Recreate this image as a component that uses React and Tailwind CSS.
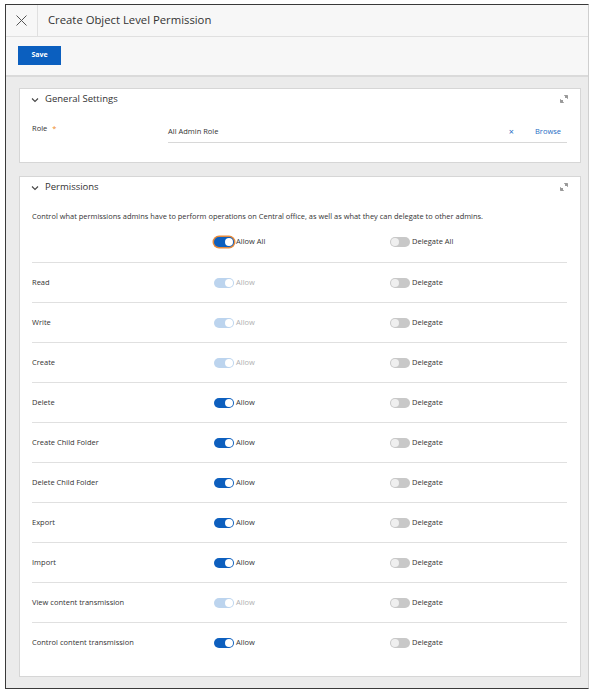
import React from "react";

const font = { fontFamily: '"Open Sans", "Noto Sans", Arial, sans-serif' };

function Toggle({ on, disabled, focus }) {
  let track = "bg-[#c8c8c8]";
  let knob = "bg-[#efefef] left-[1px]";
  if (on && !disabled) {
    track = "bg-[#0d5fbe]";
    knob = "bg-white right-[1px]";
  } else if (on && disabled) {
    track = "bg-[#bcd4ee]";
    knob = "bg-white right-[1px]";
  }
  return (
    <span
      className={
        "relative inline-block w-[20px] h-[10px] rounded-full shrink-0 " +
        track +
        (focus ? " ring-[1.5px] ring-[#e58a3c]" : "")
      }
    >
      <span className={"absolute top-[1px] w-[8px] h-[8px] rounded-full " + knob} />
    </span>
  );
}

function Expand() {
  return (
    <svg width="8" height="8" viewBox="0 0 8 8" className="text-[#9a9a9a]">
      <path d="M4.5 0.5H7.5V3.5Z M7.2 0.8L5 3" stroke="currentColor" strokeWidth="1" fill="currentColor" />
      <path d="M0.5 4.5V7.5H3.5Z M0.8 7.2L3 5" stroke="currentColor" strokeWidth="1" fill="currentColor" />
    </svg>
  );
}

function Chevron() {
  return (
    <svg width="8" height="6" viewBox="0 0 8 6" className="text-[#444]">
      <path d="M1 1.5L4 4.5L7 1.5" stroke="currentColor" strokeWidth="1.1" fill="none" />
    </svg>
  );
}

const rows = [
  ["Read", true, true],
  ["Write", true, true],
  ["Create", true, true],
  ["Delete", true, false],
  ["Create Child Folder", true, false],
  ["Delete Child Folder", true, false],
  ["Export", true, false],
  ["Import", true, false],
  ["View content transmission", true, true],
  ["Control content transmission", true, false],
];

export default function App() {
  return (
    <div className="w-[593px] h-[692px] bg-white pt-[4px] pl-[5px]" style={font}>
      <div className="w-[584px] h-[685px] border-l border-t border-b border-l-[#3a3a3a] border-t-[#3a3a3a] border-b-[#3a3a3a] border-r border-r-[#cfcfcf] flex flex-col">
        {/* header */}
        <div className="h-[32px] bg-[#f7f7f7] border-b border-[#e0e0e0] flex items-stretch shrink-0">
          <div className="w-[32px] border-r border-[#e0e0e0] flex items-center justify-center">
            <svg width="11" height="11" viewBox="0 0 11 11" className="text-[#555]">
              <path d="M0.5 0.5L10.5 10.5M10.5 0.5L0.5 10.5" stroke="currentColor" strokeWidth="1" />
            </svg>
          </div>
          <div className="flex items-center pl-[10px] text-[11.3px] text-[#333]">Create Object Level Permission</div>
        </div>
        {/* toolbar */}
        <div className="h-[40px] bg-[#f7f7f7] border-b-2 border-[#dadada] pl-[12px] pt-[9px] shrink-0">
          <button className="w-[43px] h-[19px] bg-[#0b5fbf] text-white text-[7px] font-bold flex items-center justify-center">
            Save
          </button>
        </div>
        {/* content */}
        <div className="flex-1 bg-[#ebebeb] pl-[13px] pr-[7px] pt-[11px] flex flex-col gap-[13px]">
          {/* General settings */}
          <div className="bg-white border border-[#d6d6d6] h-[75px] pl-[12px] pr-[13px] flex flex-col">
            <div className="h-[21px] flex items-center relative">
              <span className="ml-[-1px] mr-[6px] flex items-center"><Chevron /></span>
              <span className="text-[9.5px] text-[#333]">General Settings</span>
              <span className="absolute right-[-1px] top-[6px]"><Expand /></span>
            </div>
            <div className="flex mt-[10px] text-[7.5px] text-[#333]">
              <div className="w-[136px] pt-[3px]">
                Role <span className="text-[#f08a24] ml-[3px]">*</span>
              </div>
              <div className="flex-1 border-b border-[#d8d8d8] h-[23px] flex items-center pt-[2px]">
                <span className="flex-1">All Admin Role</span>
                <span className="text-[#1f6dc5] text-[9px] mr-[21px]">×</span>
                <span className="text-[#1f6dc5] mr-[6px]">Browse</span>
              </div>
            </div>
          </div>
          {/* Permissions */}
          <div className="bg-white border border-[#d6d6d6] h-[501px] pl-[12px] pr-[13px] flex flex-col">
            <div className="h-[21px] flex items-center relative shrink-0">
              <span className="ml-[-1px] mr-[6px] flex items-center"><Chevron /></span>
              <span className="text-[9.5px] text-[#333]">Permissions</span>
              <span className="absolute right-[-1px] top-[6px]"><Expand /></span>
            </div>
            <div className="mt-[12px] h-[12px] text-[7.45px] leading-[12px] text-[#333] whitespace-nowrap">
              Control what permissions admins have to perform operations on Central office, as well as what they can delegate to other admins.
            </div>
            <div className="h-[41px] border-b border-[#e0e0e0] grid grid-cols-[182px_176px_1fr] items-center text-[7.5px] text-[#333]">
              <div />
              <div className="flex items-center gap-[2px]"><Toggle on focus /><span>Allow All</span></div>
              <div className="flex items-center gap-[2px]"><Toggle /><span>Delegate All</span></div>
            </div>
            {rows.map(([label, on, disabled], i) => (
              <div
                key={label}
                className={
                  "h-[40px] grid grid-cols-[182px_176px_1fr] items-center text-[7.5px] text-[#333] " +
                  (i < rows.length - 1 ? "border-b border-[#e0e0e0]" : "")
                }
              >
                <div>{label}</div>
                <div className="flex items-center gap-[2px]">
                  <Toggle on={on} disabled={disabled} />
                  <span className={disabled ? "text-[#b0b0b0]" : ""}>Allow</span>
                </div>
                <div className="flex items-center gap-[2px]">
                  <Toggle />
                  <span>Delegate</span>
                </div>
              </div>
            ))}
          </div>
        </div>
      </div>
    </div>
  );
}
